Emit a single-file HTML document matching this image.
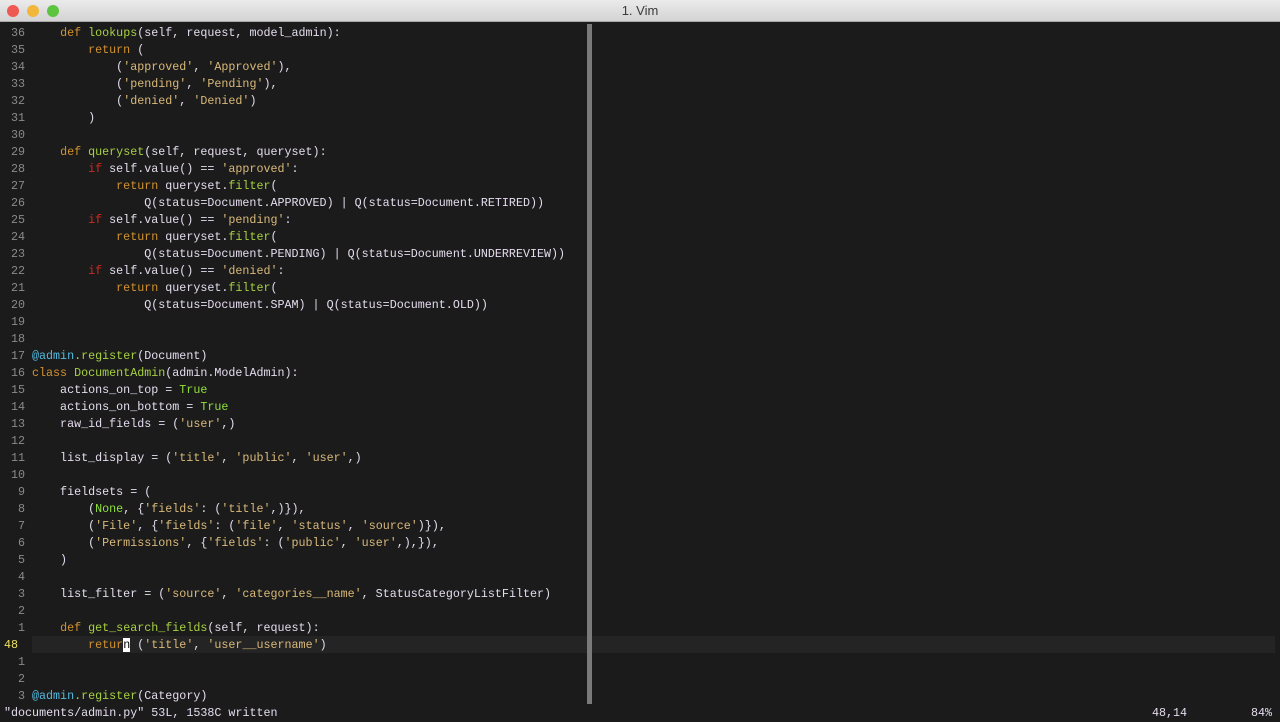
<!DOCTYPE html>
<html><head><meta charset="utf-8"><style>
body{margin:0;width:1280px;height:720px;overflow:hidden;background:#1b1b1b;position:relative;font-family:"Liberation Mono",monospace;}
#tb{position:absolute;left:0;top:0;width:1280px;height:22px;background:linear-gradient(#ebebeb,#d3d3d3);border-bottom:1px solid #a8a8a8;box-sizing:border-box;font-family:"Liberation Sans",sans-serif;font-size:13px;color:#3a3a3a;text-align:center;line-height:22px;}
.dot{position:absolute;top:5px;width:12px;height:12px;border-radius:50%;}
pre{margin:0;position:absolute;font-size:11.7px;line-height:17px;}
#code{left:32px;top:25px;color:#e4dcee;}
#nums{left:0;top:25px;width:25px;text-align:right;color:#8a8a8a;}
.k{color:#d3922e}.i{color:#cc2a20}.f{color:#a6d043}.s{color:#d9b97a}.t{color:#8fe03e}.d{color:#55b9de}
#cl{position:absolute;left:32px;top:636px;width:1243px;height:17px;background:#242424;}
#cc{position:absolute;left:587px;top:24px;width:5px;height:680px;background:#7a7a7a;}
.cur{background:#fff;color:#000;}
</style></head><body>
<div id="tb">1. Vim
<div class="dot" style="left:7px;background:#ee5a52"></div>
<div class="dot" style="left:27px;background:#f2b63a"></div>
<div class="dot" style="left:47px;background:#5cc43e"></div>
</div>
<div id="cl"></div>
<div id="cc"></div>
<pre id="nums">36
35
34
33
32
31
30
29
28
27
26
25
24
23
22
21
20
19
18
17
16
15
14
13
12
11
10
 9
 8
 7
 6
 5
 4
 3
 2
 1
<span style="color:#f0e060;position:relative;left:-7px">48</span>
 1
 2
 3</pre>
<pre id="code">    <span class="k">def</span> <span class="f">lookups</span>(self, request, model_admin):
        <span class="k">return</span> (
            (<span class="s">'approved'</span>, <span class="s">'Approved'</span>),
            (<span class="s">'pending'</span>, <span class="s">'Pending'</span>),
            (<span class="s">'denied'</span>, <span class="s">'Denied'</span>)
        )

    <span class="k">def</span> <span class="f">queryset</span>(self, request, queryset):
        <span class="i">if</span> self.value() == <span class="s">'approved'</span>:
            <span class="k">return</span> queryset.<span class="f">filter</span>(
                Q(status=Document.APPROVED) | Q(status=Document.RETIRED))
        <span class="i">if</span> self.value() == <span class="s">'pending'</span>:
            <span class="k">return</span> queryset.<span class="f">filter</span>(
                Q(status=Document.PENDING) | Q(status=Document.UNDERREVIEW))
        <span class="i">if</span> self.value() == <span class="s">'denied'</span>:
            <span class="k">return</span> queryset.<span class="f">filter</span>(
                Q(status=Document.SPAM) | Q(status=Document.OLD))


<span class="d">@admin</span><span class="f">.register</span>(Document)
<span class="k">class</span> <span class="f">DocumentAdmin</span>(admin.ModelAdmin):
    actions_on_top = <span class="t">True</span>
    actions_on_bottom = <span class="t">True</span>
    raw_id_fields = (<span class="s">'user'</span>,)

    list_display = (<span class="s">'title'</span>, <span class="s">'public'</span>, <span class="s">'user'</span>,)

    fieldsets = (
        (<span class="t">None</span>, {<span class="s">'fields'</span>: (<span class="s">'title'</span>,)}),
        (<span class="s">'File'</span>, {<span class="s">'fields'</span>: (<span class="s">'file'</span>, <span class="s">'status'</span>, <span class="s">'source'</span>)}),
        (<span class="s">'Permissions'</span>, {<span class="s">'fields'</span>: (<span class="s">'public'</span>, <span class="s">'user'</span>,),}),
    )

    list_filter = (<span class="s">'source'</span>, <span class="s">'categories__name'</span>, StatusCategoryListFilter)

    <span class="k">def</span> <span class="f">get_search_fields</span>(self, request):
        <span class="k">retur</span><span class="cur">n</span> (<span class="s">'title'</span>, <span class="s">'user__username'</span>)


<span class="d">@admin</span><span class="f">.register</span>(Category)</pre>
<pre style="left:4px;top:705px;color:#e4dcee">"documents/admin.py" 53L, 1538C written</pre>
<pre style="left:1152px;top:705px;color:#e4dcee">48,14</pre>
<pre style="left:1251px;top:705px;color:#e4dcee">84%</pre>
</body></html>
